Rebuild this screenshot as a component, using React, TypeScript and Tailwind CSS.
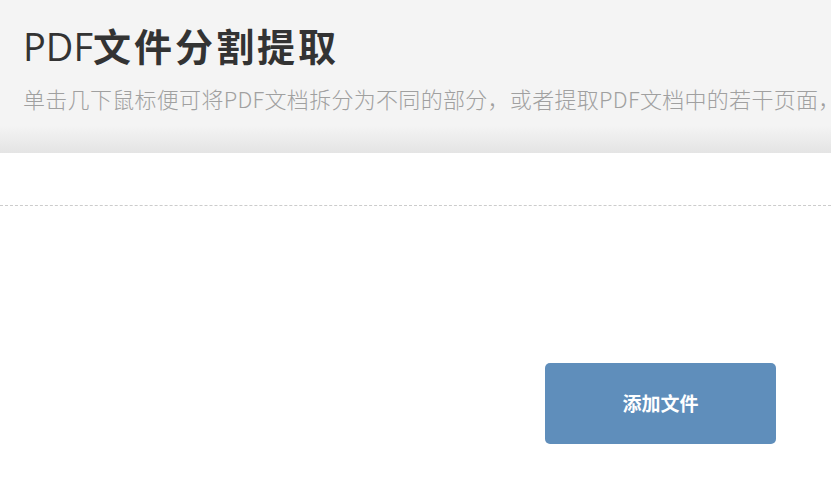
import React from "react";

const latin = { fontFamily: '"Open Sans", "Noto Sans CJK SC", sans-serif' };
const cjk = { fontFamily: '"Noto Sans CJK SC", sans-serif' };

export default function App() {
  return (
    <div className="w-[831px] h-[497px] bg-white overflow-hidden" style={latin}>
      <header className="h-[153px] px-[23px] pt-[19px] bg-[linear-gradient(to_bottom,#f4f4f4_0%,#f4f4f4_82%,#e4e4e4_100%)] overflow-hidden">
        <h1 className="text-[38px] leading-[52px] text-[#333] whitespace-nowrap">
          <span className="font-normal">PDF</span>
          <span className="font-bold tracking-[3px]" style={cjk}>文件分割提取</span>
        </h1>
        <p
          className="mt-[12px] text-[22px] leading-[28px] tracking-[0.3px] font-light text-[#a0a0a0] whitespace-nowrap"
          style={cjk}
        >
          单击几下鼠标便可将PDF文档拆分为不同的部分，或者提取PDF文档中的若干页面，
        </p>
      </header>
      <div className="h-[52px]" />
      <div className="border-t border-dashed border-[#cccccc]" />
      <div className="flex justify-end pr-[55px] pt-[157px]">
        <button className="w-[231px] h-[81px] rounded-[5px] bg-[#5f8ebb] text-white text-[19px] font-bold" style={cjk}>
          添加文件
        </button>
      </div>
    </div>
  );
}
